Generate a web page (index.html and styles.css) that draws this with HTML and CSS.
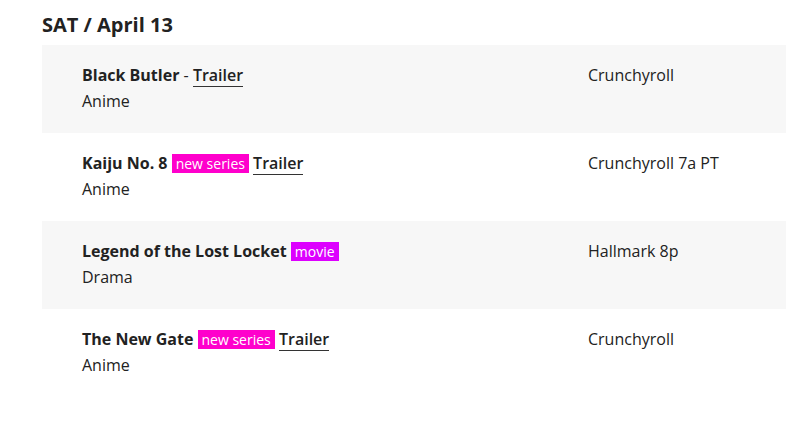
FILE: index.html
```html
<!DOCTYPE html>
<html lang="en">
<head>
    <meta charset="UTF-8">
    <meta name="viewport" content="width=device-width, initial-scale=1.0">
    <title>TV Schedule</title>
    <link rel="stylesheet" href="styles.css">
</head>
<body>

    <main class="schedule">
        <h2 class="day-title">SAT / April 13</h2>

        <div class="listing">
            <div class="show-row">
                <div class="show-info">
                    <div class="show-title"><strong>Black Butler</strong> - <a class="trailer" href="#">Trailer</a></div>
                    <div class="genre">Anime</div>
                </div>
                <div class="network">Crunchyroll</div>
            </div>

            <div class="show-row">
                <div class="show-info">
                    <div class="show-title"><strong>Kaiju No. 8</strong> <span class="badge badge-series">new series</span> <a class="trailer" href="#">Trailer</a></div>
                    <div class="genre">Anime</div>
                </div>
                <div class="network">Crunchyroll 7a PT</div>
            </div>

            <div class="show-row">
                <div class="show-info">
                    <div class="show-title"><strong>Legend of the Lost Locket</strong> <span class="badge badge-movie">movie</span></div>
                    <div class="genre">Drama</div>
                </div>
                <div class="network">Hallmark 8p</div>
            </div>

            <div class="show-row">
                <div class="show-info">
                    <div class="show-title"><strong>The New Gate</strong> <span class="badge badge-series">new series</span> <a class="trailer" href="#">Trailer</a></div>
                    <div class="genre">Anime</div>
                </div>
                <div class="network">Crunchyroll</div>
            </div>
        </div>
    </main>

</body>
</html>
```

FILE: styles.css
```css
:root {
    --text-color: #222;
    --row-gray: #f7f7f7;
}

body {
    margin: 0;
    background: white;
    color: var(--text-color);
    font-family: "Open Sans", sans-serif;
    font-size: 16px;
}

.schedule {
    padding-left: 42px;
}

.day-title {
    margin: 0 0 6px;
    padding-top: 11px;
    font-size: 20px;
    line-height: 28px;
    font-weight: 700;
}

.show-row {
    display: grid;
    grid-template-columns: 506px 1fr;
    padding: 17px 0 19px 40px;
    line-height: 26px;
}

.show-row:nth-child(odd) {
    background: var(--row-gray);
}

.show-title strong {
    font-weight: 700;
}

.trailer {
    color: var(--text-color);
    font-weight: 600;
    text-decoration: none;
    border-bottom: 1px solid #333;
}

.badge {
    display: inline-block;
    padding: 0 4px;
    line-height: 19px;
    font-size: 14px;
    font-weight: 500;
    color: white;
}

.badge-series {
    background: #ff00cc;
}

.badge-movie {
    background: #dd00ff;
}

.genre,
.network {
    font-weight: 400;
}
```
